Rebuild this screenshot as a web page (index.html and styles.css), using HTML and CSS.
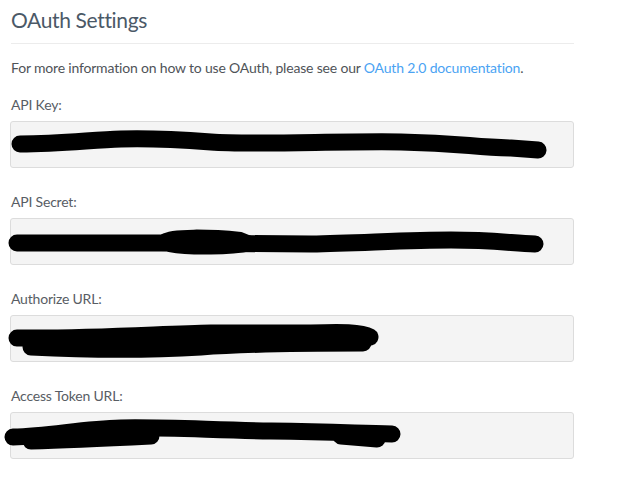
FILE: index.html
```html
<!DOCTYPE html>
<html>
<head>
<meta charset="utf-8">
<link rel="stylesheet" href="styles.css">
</head>
<body>
<div class="page">
  <h2 class="title">OAuth Settings</h2>
  <div class="rule"></div>
  <p class="intro">For more information on how to use OAuth, please see our <a class="link" href="#">OAuth 2.0 documentation</a>.</p>
  <div class="fields">
    <div class="field">
      <div class="label">API Key:</div>
      <div class="box">
        <svg class="scribble" viewBox="0 0 564 47" width="564" height="47">
          <path d="M9 22 C 50 22, 80 18, 110 17 S 160 17, 200 20 S 330 19, 390 20 S 460 25, 500 26 L 527 28" />
        </svg>
      </div>
    </div>
    <div class="field">
      <div class="label">API Secret:</div>
      <div class="box">
        <svg class="scribble" viewBox="0 0 564 47" width="564" height="47">
          <path d="M6 24 L 150 24 L 300 25 C 350 24, 400 21, 440 21 S 500 24, 524 25" />
          <path class="fill" d="M152 18 C 160 12, 200 13, 230 16 L 240 20 L 240 29 C 220 33, 180 34, 158 30 Z" />
        </svg>
      </div>
    </div>
    <div class="field">
      <div class="label">Authorize URL:</div>
      <div class="box">
        <svg class="scribble" viewBox="0 0 564 47" width="564" height="47">
          <path d="M6 22 C 80 23, 150 18, 200 17 L 300 17 C 330 16, 350 16, 359 21" />
          <path d="M20 31 C 80 34, 140 34, 190 31 C 230 28, 300 27, 352 27" />
        </svg>
      </div>
    </div>
    <div class="field">
      <div class="label">Access Token URL:</div>
      <div class="box">
        <svg class="scribble" viewBox="0 0 564 47" width="564" height="47">
          <path d="M2 24 C 40 23, 70 16, 110 15 S 200 17, 260 18 S 340 20, 381 21" />
          <path d="M20 28 C 60 27, 100 25, 140 23" />
          <path d="M330 23 L 366 26" />
        </svg>
      </div>
    </div>
  </div>
</div>
</body>
</html>
```

FILE: styles.css
```css
html, body {
  margin: 0;
  padding: 0;
  background: #ffffff;
}

.page {
  width: 563px;
  padding: 5px 0 0 11px;
  font-family: "Lato", "Open Sans", sans-serif;
  color: #555b63;
}

.title {
  margin: 0;
  font-size: 21px;
  font-weight: 400;
  line-height: 30px;
  letter-spacing: -0.35px;
  color: #4b5967;
}

.rule {
  margin-top: 8px;
  height: 0;
  border-top: 1px solid #ececec;
}

.intro {
  margin: 14px 0 0 0;
  font-size: 14px;
  line-height: 20px;
  letter-spacing: -0.18px;
  color: #4f5358;
}

.link {
  color: #4aa3f3;
  text-decoration: none;
}

.fields {
  margin-top: 17px;
  display: flex;
  flex-direction: column;
  gap: 24px;
}

.field {
  display: flex;
  flex-direction: column;
  gap: 6px;
}

.label {
  font-size: 14px;
  line-height: 20px;
  letter-spacing: -0.2px;
  color: #585d64;
}

.box {
  margin-left: -1px;
  height: 45px;
  border: 1px solid #dcdcdc;
  border-radius: 3px;
  background: #f4f4f4;
  overflow: visible;
}

.scribble {
  display: block;
  overflow: visible;
}

.scribble path {
  fill: none;
  stroke: #000;
  stroke-width: 17;
  stroke-linecap: round;
  stroke-linejoin: round;
}

.scribble path.fill {
  fill: #000;
  stroke-width: 6;
}
```
